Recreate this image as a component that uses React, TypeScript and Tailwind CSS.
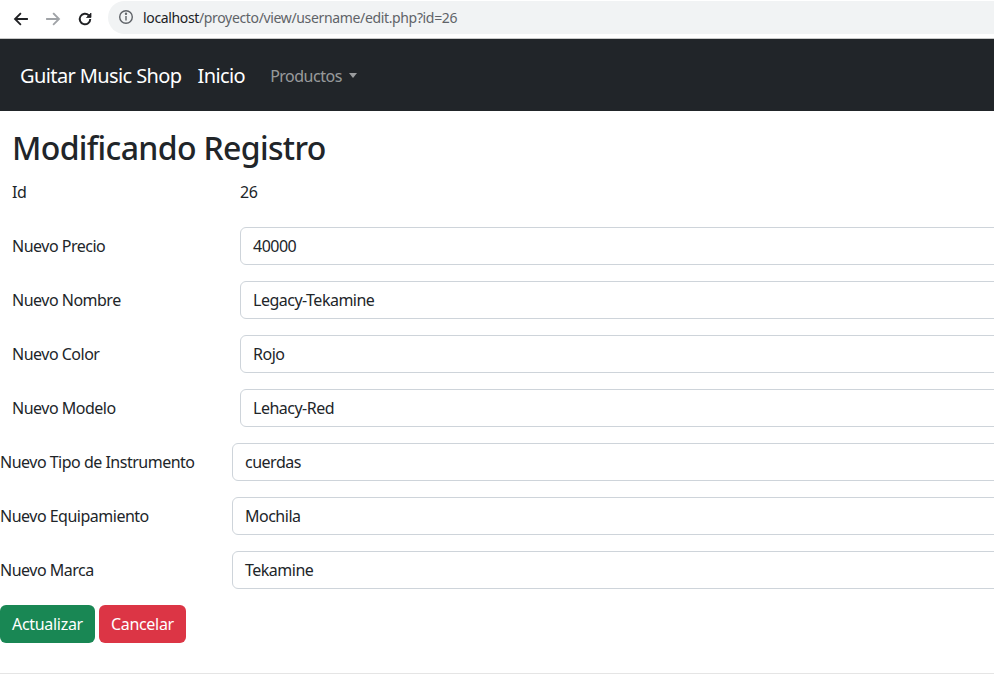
import React from "react";

const rows = [
  { label: "Nuevo Precio", value: "40000", indent: true },
  { label: "Nuevo Nombre", value: "Legacy-Tekamine", indent: true },
  { label: "Nuevo Color", value: "Rojo", indent: true },
  { label: "Nuevo Modelo", value: "Lehacy-Red", indent: true },
  { label: "Nuevo Tipo de Instrumento", value: "cuerdas", indent: false },
  { label: "Nuevo Equipamiento", value: "Mochila", indent: false },
  { label: "Nuevo Marca", value: "Tekamine", indent: false },
];

export default function App() {
  return (
    <div
      className="w-[994px] h-[674px] overflow-hidden bg-white text-[#212529] tracking-[-0.5px]"
      style={{ fontFamily: '"Noto Sans", "Open Sans", sans-serif' }}
    >
      {/* browser chrome */}
      <div className="h-[39px] flex items-center bg-white border-b border-[#c8c8c8] tracking-normal">
        <div className="w-[108px] flex items-center pl-[12px] gap-[14px] shrink-0">
          <svg width="18" height="18" viewBox="0 0 24 24" fill="none" stroke="#202124" strokeWidth="2.4" strokeLinecap="square">
            <path d="M20 12H5M11 5l-7 7 7 7" />
          </svg>
          <svg width="18" height="18" viewBox="0 0 24 24" fill="none" stroke="#a0a3a7" strokeWidth="2.4" strokeLinecap="square">
            <path d="M4 12h15M13 5l7 7-7 7" />
          </svg>
          <svg width="18" height="18" viewBox="0 0 24 24" fill="none" stroke="#202124" strokeWidth="2.6">
            <path d="M19 12a7 7 0 1 1-2.05-4.95" />
            <path d="M20 4v6h-6z" fill="#202124" strokeWidth="1" />
          </svg>
        </div>
        <div className="flex-1 h-[33px] mb-[4px] rounded-l-full bg-[#f1f3f4] flex items-center pl-[10px]">
          <svg width="16" height="16" viewBox="0 0 16 16" fill="none" stroke="#5f6368" strokeWidth="1.4">
            <circle cx="8" cy="8" r="6.3" />
            <path d="M8 7v4.5" />
            <circle cx="8" cy="4.8" r="0.5" fill="#5f6368" />
          </svg>
          <span className="ml-[9px] text-[14px] text-[#5f6368] tracking-[-0.35px]">
            <span className="text-[#202124]">localhost</span>/proyecto/view/username/edit.php?id=26
          </span>
        </div>
      </div>

      {/* navbar */}
      <nav className="h-[72px] bg-[#212529] flex items-center pl-[20px] pt-[1px]">
        <span className="text-[20px] text-white tracking-[-0.6px]">Guitar Music Shop</span>
        <span className="text-[20px] text-white ml-[16px] tracking-[-0.6px]">Inicio</span>
        <span className="text-[16px] text-[#ffffff8c] ml-[25px] flex items-center">
          Productos
          <span className="ml-[7px] inline-block w-0 h-0 border-l-[4px] border-r-[4px] border-t-[5px] border-l-transparent border-r-transparent border-t-[#ffffff8c]" />
        </span>
      </nav>

      {/* content */}
      <div className="pt-[17px]">
        <h1 className="pl-[12px] text-[32px] font-medium leading-[1.2] h-[41px] tracking-[-0.65px] pt-[1px]">Modificando Registro</h1>
        <div className="flex items-center h-[38px] mt-[4px]">
          <span className="pl-[12px] w-[240px] text-[16px]">Id</span>
          <span className="text-[16px]">26</span>
        </div>
        <div className="flex flex-col gap-[16px] mt-[16px]">
          {rows.map((r) => (
            <div key={r.label} className="flex items-center h-[38px]">
              <span className={r.indent ? "pl-[12px] w-[240px] shrink-0 text-[16px]" : "w-[232px] shrink-0 text-[16px]"}>
                {r.label}
              </span>
              <div className="w-[800px] shrink-0 h-[38px] border border-[#ced4da] rounded-[6px] flex items-center pl-[12px] text-[16px]">
                {r.value}
              </div>
            </div>
          ))}
        </div>
        <div className="flex gap-[4px] mt-[16px]">
          <button className="h-[38px] px-[12px] rounded-[6px] bg-[#198754] text-white text-[16px] tracking-[-0.3px]">Actualizar</button>
          <button className="h-[38px] px-[12px] rounded-[6px] bg-[#dc3545] text-white text-[16px] tracking-[-0.3px]">Cancelar</button>
        </div>
        <div className="mt-[30px] border-t border-[#e5e5e5]" />
      </div>
    </div>
  );
}
